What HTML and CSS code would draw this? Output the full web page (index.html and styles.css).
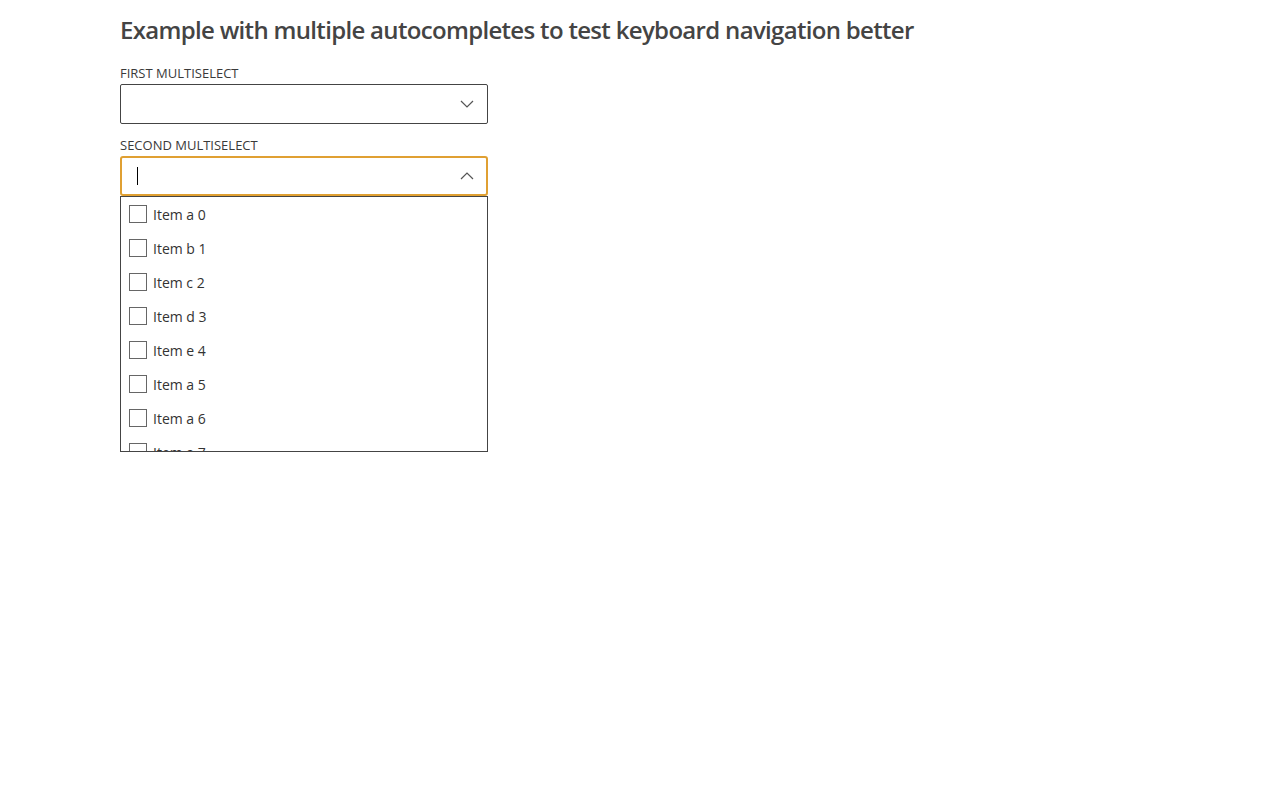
FILE: index.html
```html
<!DOCTYPE html>
<html lang="en">
<head>
<meta charset="utf-8">
<title>Multiselect example</title>
<link rel="stylesheet" href="styles.css">
</head>
<body>
<main class="page">
  <h1 class="title">Example with multiple autocompletes to test keyboard navigation better</h1>

  <div class="field">
    <label class="label">FIRST MULTISELECT</label>
    <div class="control">
      <span class="input"></span>
      <svg class="chevron" width="14" height="8" viewBox="0 0 14 8"><path d="M1 1 L7 7 L13 1" fill="none" stroke="#555" stroke-width="1.2"/></svg>
    </div>
  </div>

  <div class="field">
    <label class="label">SECOND MULTISELECT</label>
    <div class="control focused">
      <span class="input"><span class="caret"></span></span>
      <svg class="chevron" width="14" height="8" viewBox="0 0 14 8"><path d="M1 7 L7 1 L13 7" fill="none" stroke="#555" stroke-width="1.2"/></svg>
    </div>
    <ul class="list">
      <li class="option"><span class="box"></span>Item a 0</li>
      <li class="option"><span class="box"></span>Item b 1</li>
      <li class="option"><span class="box"></span>Item c 2</li>
      <li class="option"><span class="box"></span>Item d 3</li>
      <li class="option"><span class="box"></span>Item e 4</li>
      <li class="option"><span class="box"></span>Item a 5</li>
      <li class="option"><span class="box"></span>Item a 6</li>
      <li class="option"><span class="box"></span>Item a 7</li>
    </ul>
  </div>
</main>
</body>
</html>
```
FILE: styles.css
```css
html, body {
  margin: 0;
  padding: 0;
  background: #fff;
}
body {
  font-family: "Open Sans", "Noto Sans", sans-serif;
  color: #333;
}
.page {
  padding: 14px 0 0 120px;
}
.title {
  margin: 0 0 18px 0;
  font-size: 24px;
  line-height: 32px;
  font-weight: 600;
  color: #444;
  letter-spacing: -0.68px;
}
.field {
  width: 368px;
  margin-bottom: 12px;
}
.label {
  display: block;
  font-size: 13px;
  line-height: 18px;
  color: #3a3a3a;
  margin-bottom: 2px;
}
.control {
  box-sizing: border-box;
  height: 40px;
  border: 1px solid #444;
  border-radius: 2px;
  display: flex;
  align-items: center;
  padding: 0 13px 0 15px;
}
.control.focused {
  border: 2px solid #e0a032;
  border-radius: 3px;
  padding-left: 15px;
  padding-right: 12px;
}
.input {
  flex: 1;
  display: flex;
  align-items: center;
  height: 20px;
}
.caret {
  width: 1px;
  height: 18px;
  background: #000;
}
.chevron {
  display: block;
}
.list {
  box-sizing: border-box;
  list-style: none;
  margin: 0;
  padding: 0;
  height: 256px;
  overflow: hidden;
  border: 1px solid #444;
}
.option {
  height: 34px;
  display: flex;
  align-items: center;
  padding-left: 8px;
  font-size: 14px;
  color: #333;
}
.box {
  box-sizing: border-box;
  width: 18px;
  height: 18px;
  border: 1px solid #666;
  margin-right: 6px;
  flex: none;
}
```
